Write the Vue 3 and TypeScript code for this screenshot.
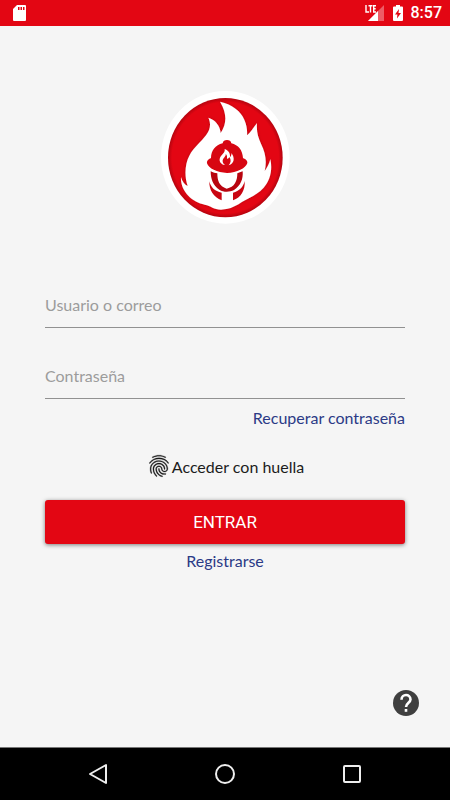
<script setup lang="ts">
import { ref } from 'vue'

const user = ref('')
const password = ref('')
const clock = '8:57'
</script>

<template>
  <div class="screen">
    <header class="status">
      <svg class="sd" viewBox="0 0 13 16" aria-hidden="true">
        <path fill="#fff" d="M4 0h8a1 1 0 0 1 1 1v14a1 1 0 0 1-1 1H1a1 1 0 0 1-1-1V4z" />
        <path fill="#e30613" d="M5 2h1.500v3H5zM7.500 2H9v3H7.500zM10 2h1.500v3H10z" />
      </svg>
      <div class="status-right">
        <svg class="signal" viewBox="0 0 20 16" aria-label="LTE">
          <path d="M19 0v16H3z" fill="#fff" opacity=".35" />
          <path d="M13 6v10H3z" fill="#fff" />
          <rect width="11" height="8" fill="#e30613" />
          <path
            d="M1 0v7h3M3.500 .7h4M5.500 .7V7.600M11 .7H8.700V7H11M8.700 3.800h2"
            fill="none"
            stroke="#fff"
            stroke-width="1.400"
          />
        </svg>
        <svg class="battery" viewBox="0 0 10 16" aria-hidden="true">
          <path fill="#fff" d="M3 0h4v1.500h2a1 1 0 0 1 1 1V15a1 1 0 0 1-1 1H1a1 1 0 0 1-1-1V2.500a1 1 0 0 1 1-1h2z" />
          <path fill="#e30613" d="M6 4L2 9.500h2.400L4 13.500l4-5.500H5.500z" />
        </svg>
        <span>{{ clock }}</span>
      </div>
    </header>

    <main class="content">
      <svg class="logo" viewBox="0 0 420 420" role="img" aria-label="Logo">
        <defs>
          <radialGradient id="rim">
            <stop offset="0.930" stop-color="#e30613" />
            <stop offset="1" stop-color="#b4040f" />
          </radialGradient>
          <filter id="soft" x="-10%" y="-10%" width="120%" height="120%">
            <feDropShadow dx="0" dy="0" stdDeviation="5" flood-color="#700" flood-opacity=".45" />
          </filter>
        </defs>
        <ellipse cx="211" cy="217" rx="193" ry="199" fill="#fff" />
        <ellipse cx="211" cy="218" rx="172" ry="179" fill="url(#rim)" />
        <path
          filter="url(#soft)"
          fill="#fff"
          d="M78 276C82 290 89 299 98 303C88 275 89 238 103 212C116 187 139 170 153 151C167 132 168 116 160 98C181 105 195 121 197 144C215 118 217 86 195 50C233 59 257 78 268 104C276 122 277 138 276 151C286 143 295 128 306 114C304 139 309 157 318 176C332 204 336 230 329 258C336 249 342 238 346 222C353 254 346 286 326 308C309 327 287 336 266 348C245 361 228 373 198 374C176 374 168 362 149 359C112 353 75 318 78 276Z"
        />
        <g fill="#c90511">
          <path
            fill="#d70612"
            d="M156 235C155 226 162 222 168 219C168 197 181 180 203 175C204 168 209 165 216 165C223 165 228 168 229 175C250 180 263 196 264 219C270 222 278 226 277 234C272 250 246 263 216 264C187 263 160 250 156 235Z"
          />
          <path
            fill="#b8040f"
            d="M167 259C174 263 181 265 187 265C187 285 192 305 215 311C239 307 247 288 247 265L263 259C265 282 257 302 237 315C223 322 206 322 193 314C174 302 167 282 167 259Z"
          />
          <path d="M163 289C167 307 179 319 200 323V346C176 337 162 316 163 289Z" />
          <path d="M269 288C271 315 258 338 234 346V323C253 318 265 306 269 288Z" />
        </g>
        <path
          fill="#fff"
          d="M209 192C224 198 226 209 225 216C229 213 230 208 229 204C240 218 239 235 221 241C228 233 229 224 223 216C220 222 216 224 216 218C217 212 214 209 212 207C214 215 202 219 203 229C203 235 207 238 210 240C197 238 191 228 195 218C198 210 211 204 209 192Z"
        />
      </svg>

      <form class="form" @submit.prevent>
        <input v-model="user" class="field" type="text" aria-label="Usuario o correo" placeholder="Usuario o correo" />
        <input
          v-model="password"
          class="field password"
          type="password"
          aria-label="Contraseña"
          placeholder="Contraseña"
        />
        <a class="link recover" href="#">Recuperar contraseña</a>
        <button class="finger" type="button">
          <svg viewBox="0 0 24 24" aria-hidden="true">
            <path
              d="M17.810 4.470c-.08 0-.16-.02-.23-.06C15.660 3.420 14 3 12.010 3c-1.980 0-3.860.47-5.570 1.410-.24.13-.54.04-.68-.2-.13-.24-.04-.55.2-.68C7.820 2.520 9.860 2 12.010 2c2.130 0 3.990.47 6.030 1.520.25.13.34.43.21.67-.09.18-.26.28-.44.28zM3.500 9.720c-.1 0-.2-.03-.29-.09-.23-.16-.28-.47-.12-.7.99-1.400 2.250-2.500 3.750-3.270C9.980 4.040 14 4.030 17.150 5.650c1.500.77 2.760 1.860 3.750 3.250.16.22.11.54-.12.7-.23.16-.54.11-.7-.12-.9-1.260-2.040-2.250-3.390-2.940-2.870-1.470-6.540-1.470-9.400.01-1.360.7-2.500 1.700-3.400 2.960-.08.14-.23.21-.39.21zm6.250 12.070c-.13 0-.26-.05-.35-.15-.87-.87-1.340-1.430-2.010-2.640-.69-1.230-1.050-2.730-1.050-4.340 0-2.970 2.540-5.390 5.660-5.390s5.660 2.420 5.660 5.390c0 .28-.22.5-.5.5s-.5-.22-.5-.5c0-2.420-2.090-4.390-4.660-4.390-2.570 0-4.660 1.970-4.660 4.390 0 1.440.32 2.770.93 3.850.64 1.150 1.080 1.640 1.850 2.420.19.2.19.51 0 .71-.11.1-.24.15-.37.15zm7.170-1.850c-1.190 0-2.240-.3-3.100-.89-1.490-1.010-2.380-2.650-2.380-4.390 0-.28.22-.5.5-.5s.5.22.5.5c0 1.410.72 2.740 1.940 3.560.71.48 1.540.71 2.540.71.24 0 .64-.03 1.040-.1.27-.05.53.13.58.41.05.27-.13.53-.41.58-.57.11-1.070.12-1.210.12zM14.910 22c-.04 0-.09-.01-.13-.02-1.590-.44-2.630-1.030-3.720-2.100-1.400-1.390-2.170-3.240-2.170-5.220 0-1.620 1.380-2.940 3.080-2.940 1.700 0 3.080 1.320 3.080 2.940 0 1.070.93 1.940 2.080 1.940s2.080-.87 2.080-1.940c0-3.770-3.250-6.830-7.250-6.830-2.840 0-5.440 1.580-6.610 4.030-.39.81-.59 1.760-.59 2.800 0 .78.07 2.010.67 3.610.1.26-.03.55-.29.64-.26.1-.55-.04-.64-.29-.49-1.310-.73-2.610-.73-3.960 0-1.200.23-2.290.68-3.240 1.330-2.790 4.280-4.600 7.510-4.600 4.550 0 8.250 3.510 8.250 7.830 0 1.620-1.380 2.940-3.080 2.940s-3.080-1.320-3.080-2.940c0-1.070-.93-1.940-2.080-1.940s-2.080.87-2.080 1.940c0 1.710.66 3.310 1.870 4.510.95.94 1.860 1.460 3.270 1.850.27.07.42.35.35.61-.05.23-.26.38-.47.38z"
            />
          </svg>
          <span>Acceder con huella</span>
        </button>
        <button class="enter" type="submit">ENTRAR</button>
        <a class="link register" href="#">Registrarse</a>
      </form>

      <button class="help" type="button" aria-label="Ayuda">
        <svg viewBox="0 0 26 26" aria-hidden="true">
          <circle cx="13" cy="13" r="13" fill="#3f3f3f" />
          <path
            d="M8.500 9.700C8.500 3.500 17.500 3.500 17.500 9.500C17.500 12.500 13 13 13 17"
            fill="none"
            stroke="#fff"
            stroke-width="2.600"
          />
          <path d="M11.700 19h2.600v2.800h-2.600z" fill="#fff" />
        </svg>
      </button>
    </main>

    <nav class="navbar">
      <button type="button" aria-label="Atrás">
        <svg viewBox="0 0 24 24"><path d="M20 3v18L4 12z" /></svg>
      </button>
      <button type="button" aria-label="Inicio">
        <svg viewBox="0 0 24 24"><circle cx="12" cy="12" r="9" /></svg>
      </button>
      <button type="button" aria-label="Recientes">
        <svg viewBox="0 0 24 24"><rect x="4" y="4" width="16" height="16" rx="1" /></svg>
      </button>
    </nav>
  </div>
</template>

<style>
body {
  margin: 0;
}
</style>

<style scoped>
.screen {
  display: flex;
  flex-direction: column;
  min-height: 100vh;
  background: #f5f5f5;
  font-family: Lato, sans-serif;
  font-size: 16px;
}

button {
  padding: 0;
  border: 0;
  background: none;
  font: inherit;
  color: inherit;
  cursor: pointer;
}

svg {
  display: block;
}

.status {
  display: flex;
  align-items: center;
  justify-content: space-between;
  box-sizing: border-box;
  height: 26px;
  padding: 0 8px 0 13px;
  background: #e30613;
  color: #fff;
  font: 500 16px/26px Roboto, sans-serif;
}

.sd {
  width: 13px;
  height: 16px;
}

.status-right {
  display: flex;
  align-items: center;
  gap: 8px;
}

.signal {
  width: 20px;
  height: 16px;
}

.battery {
  width: 10px;
  height: 16px;
}

.content {
  position: relative;
  display: flex;
  flex: 1;
  flex-direction: column;
  align-items: center;
  padding: 59px 45px 0;
}

.logo {
  width: 140px;
  height: 140px;
}

.form {
  display: flex;
  flex-direction: column;
  align-items: center;
  width: 100%;
  margin-top: 59px;
}

.field {
  box-sizing: border-box;
  width: 100%;
  height: 44px;
  padding: 0 0 3px;
  border: 0;
  border-bottom: 1px solid #919191;
  border-radius: 0;
  outline: 0;
  background: none;
  color: #222;
  font: inherit;
}

.field::placeholder {
  color: #9c9c9c;
  opacity: 1;
}

.password {
  margin-top: 27px;
}

.link {
  color: #2b3a86;
  line-height: 20px;
  text-decoration: none;
}

.recover {
  align-self: flex-end;
  margin-top: 9px;
}

.finger {
  display: flex;
  align-items: center;
  margin-top: 25px;
  color: #1c1c1c;
}

.finger svg {
  width: 26px;
  height: 26px;
  fill: currentColor;
  stroke: currentColor;
  stroke-width: 0.25;
}

.enter {
  width: 100%;
  height: 44px;
  margin-top: 21px;
  border-radius: 3px;
  background: #e30613;
  box-shadow: 0 1px 4px rgba(0, 0, 0, 0.5);
  color: #fff;
  font: 400 17px/42px Roboto, sans-serif;
}

.register {
  margin-top: 7px;
}

.help {
  position: absolute;
  right: 31px;
  bottom: 31px;
}

.help svg {
  width: 26px;
  height: 26px;
}

.navbar {
  display: flex;
  align-items: center;
  justify-content: space-around;
  box-sizing: border-box;
  height: 53px;
  padding: 0 34px;
  border-top: 1px solid #777;
  background: #000;
}

.navbar svg {
  width: 24px;
  height: 24px;
  fill: none;
  stroke: #eee;
  stroke-width: 2;
  stroke-linejoin: round;
}
</style>
